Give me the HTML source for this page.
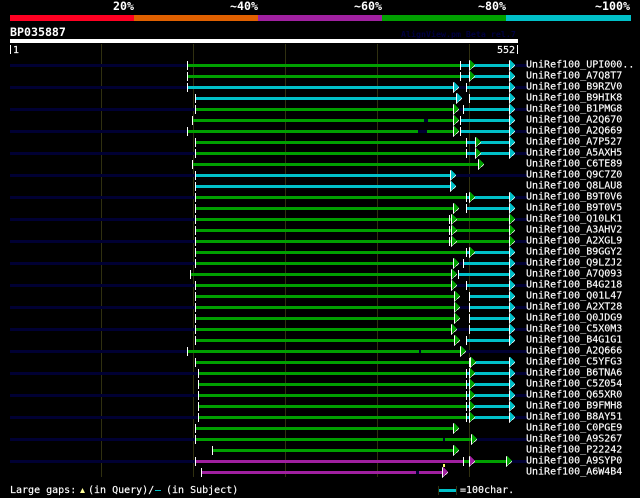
<!DOCTYPE html>
<html><head><meta charset="utf-8"><style>
html,body{margin:0;padding:0;background:#000;width:640px;height:498px;overflow:hidden}
svg{display:block}
text{font-family:"DejaVu Sans Mono","Liberation Mono",monospace;font-size:10px;fill:#fff;stroke:#fff;stroke-width:.15;white-space:pre}
.h{font-weight:bold;font-size:11.62px;stroke:none}
.a{font-weight:bold;font-size:8.3px;fill:#000040;stroke:none}
path{fill:none;stroke-width:3}
polygon{shape-rendering:crispEdges}
.k{stroke:#000033}.g{stroke:#00a000}.c{stroke:#00c0c8}.p{stroke:#a020a0}
.t{stroke:#fff;stroke-width:1}
.w{stroke:#303010;stroke-width:1}
</style></head><body>
<svg width="640" height="498" viewBox="0 0 640 498" xmlns="http://www.w3.org/2000/svg">
<defs>
<g id="G"><polygon points="0,-5.500 6.500,0 0,5.500" fill="#fff"/><polygon points="1,-5.500 6,-.5 1,4" fill="#00a000"/></g>
<g id="C"><polygon points="0,-5.500 6.500,0 0,5.500" fill="#fff"/><polygon points="1,-5.500 6,-.5 1,4" fill="#00c0c8"/></g>
<g id="P"><polygon points="0,-5.500 6.500,0 0,5.500" fill="#fff"/><polygon points="1,-5.500 6,-.5 1,4" fill="#a020a0"/></g>
</defs>
<text class="h" x="113" y="10">20%</text><text class="h" x="230" y="10">~40%</text><text class="h" x="354" y="10">~60%</text><text class="h" x="478" y="10">~80%</text><text class="h" x="595" y="10">~100%</text>
<rect x="10" y="15" width="124" height="6" fill="#ff0022"/><rect x="134" y="15" width="124" height="6" fill="#e06000"/><rect x="258" y="15" width="124" height="6" fill="#a020a0"/><rect x="382" y="15" width="124" height="6" fill="#00a000"/><rect x="506" y="15" width="125" height="6" fill="#00c0c8"/>
<text class="h" x="10" y="36">BP035887</text>
<text class="a" x="401" y="37">AlignView.pm Beta rel.7</text>
<rect x="10" y="39" width="508" height="4" fill="#fff"/>
<rect x="10" y="45" width="1" height="9" fill="#fff"/><text x="13" y="53">1</text>
<text x="497" y="53">552</text><rect x="517" y="45" width="1" height="9" fill="#fff"/>
<path class="w" d="M101.5 44V477M193.5 44V477M285.5 44V477M377.5 44V477M469.5 44V477"/>

<g transform="translate(0,65.5)"><path class="k" d="M10 0H187M515 0H527"/><path class="g" d="M188 0H460"/><path class="c" d="M461 0H510"/><path class="t" d="M187.5-4.5V4.5M460.5-4.5V4.5"/><use href="#G" x="469"/><use href="#C" x="509"/><text x="526" y="2">UniRef100_UPI000..</text></g>
<g transform="translate(0,76.5)"><path class="g" d="M188 0H460"/><path class="c" d="M461 0H510"/><path class="t" d="M187.5-4.5V4.5M460.5-4.5V4.5"/><use href="#G" x="469"/><use href="#C" x="509"/><text x="526" y="2">UniRef100_A7Q8T7</text></g>
<g transform="translate(0,87.5)"><path class="k" d="M10 0H187M459 0H466M515 0H527"/><path class="c" d="M188 0H454M467 0H510"/><path class="t" d="M187.5-4.5V4.5M466.5-4.5V4.5"/><use href="#C" x="453"/><use href="#C" x="509"/><text x="526" y="2">UniRef100_B9RZV0</text></g>
<g transform="translate(0,98.5)"><path class="c" d="M196 0H457M470 0H510"/><path class="t" d="M195.5-4.5V4.5M469.5-4.5V4.5"/><use href="#C" x="456"/><use href="#C" x="509"/><text x="526" y="2">UniRef100_B9HIK8</text></g>
<g transform="translate(0,109.5)"><path class="k" d="M10 0H195M459 0H463M515 0H527"/><path class="g" d="M196 0H454"/><path class="c" d="M464 0H510"/><path class="t" d="M195.5-4.5V4.5M463.5-4.5V4.5"/><use href="#G" x="453"/><use href="#C" x="509"/><text x="526" y="2">UniRef100_B1PMG8</text></g>
<g transform="translate(0,120.5)"><path class="k" d="M424 0H428"/><path class="g" d="M193 0H424M428 0H454"/><path class="c" d="M461 0H510"/><path class="t" d="M192.5-4.5V4.5M460.5-4.5V4.5"/><use href="#G" x="453"/><use href="#C" x="509"/><text x="526" y="2">UniRef100_A2Q670</text></g>
<g transform="translate(0,131.5)"><path class="k" d="M10 0H187M418 0H427M515 0H527"/><path class="g" d="M188 0H418M427 0H454"/><path class="c" d="M461 0H510"/><path class="t" d="M187.5-4.5V4.5M460.5-4.5V4.5"/><use href="#G" x="453"/><use href="#C" x="509"/><text x="526" y="2">UniRef100_A2Q669</text></g>
<g transform="translate(0,142.5)"><path class="g" d="M196 0H466"/><path class="c" d="M467 0H510"/><path class="t" d="M195.5-4.5V4.5M466.5-4.5V4.5"/><use href="#G" x="475"/><use href="#C" x="509"/><text x="526" y="2">UniRef100_A7P527</text></g>
<g transform="translate(0,153.5)"><path class="k" d="M10 0H195M515 0H527"/><path class="g" d="M196 0H466"/><path class="c" d="M467 0H510"/><path class="t" d="M195.5-4.5V4.5M466.5-4.5V4.5"/><use href="#G" x="475"/><use href="#C" x="509"/><text x="526" y="2">UniRef100_A5AXH5</text></g>
<g transform="translate(0,164.5)"><path class="g" d="M193 0H479"/><path class="t" d="M192.5-4.5V4.5"/><use href="#G" x="478"/><text x="526" y="2">UniRef100_C6TE89</text></g>
<g transform="translate(0,175.5)"><path class="k" d="M10 0H195M456 0H527"/><path class="c" d="M196 0H451"/><path class="t" d="M195.5-4.5V4.5"/><use href="#C" x="450"/><text x="526" y="2">UniRef100_Q9C7Z0</text></g>
<g transform="translate(0,186.5)"><path class="c" d="M196 0H451"/><path class="t" d="M195.5-4.5V4.5"/><use href="#C" x="450"/><text x="526" y="2">UniRef100_Q8LAU8</text></g>
<g transform="translate(0,197.5)"><path class="k" d="M10 0H195M515 0H527"/><path class="g" d="M196 0H466"/><path class="c" d="M467 0H510"/><path class="t" d="M195.5-4.5V4.5M466.5-4.5V4.5"/><use href="#G" x="469"/><use href="#C" x="509"/><text x="526" y="2">UniRef100_B9T0V6</text></g>
<g transform="translate(0,208.5)"><path class="g" d="M196 0H454"/><path class="c" d="M467 0H510"/><path class="t" d="M195.5-4.5V4.5M466.5-4.5V4.5"/><use href="#G" x="453"/><use href="#C" x="509"/><text x="526" y="2">UniRef100_B9T0V5</text></g>
<g transform="translate(0,219.5)"><path class="k" d="M10 0H195M515 0H527"/><path class="g" d="M196 0H510"/><path class="t" d="M195.5-4.5V4.5M449.5-4.5V4.5"/><use href="#G" x="451"/><use href="#G" x="509"/><text x="526" y="2">UniRef100_Q10LK1</text></g>
<g transform="translate(0,230.5)"><path class="g" d="M196 0H510"/><path class="t" d="M195.5-4.5V4.5M449.5-4.5V4.5"/><use href="#G" x="451"/><use href="#G" x="509"/><text x="526" y="2">UniRef100_A3AHV2</text></g>
<g transform="translate(0,241.5)"><path class="k" d="M10 0H195M515 0H527"/><path class="g" d="M196 0H510"/><path class="t" d="M195.5-4.5V4.5M449.5-4.5V4.5"/><use href="#G" x="451"/><use href="#G" x="509"/><text x="526" y="2">UniRef100_A2XGL9</text></g>
<g transform="translate(0,252.5)"><path class="g" d="M196 0H466"/><path class="c" d="M467 0H510"/><path class="t" d="M195.5-4.5V4.5M466.5-4.5V4.5"/><use href="#G" x="469"/><use href="#C" x="509"/><text x="526" y="2">UniRef100_B9GGY2</text></g>
<g transform="translate(0,263.5)"><path class="k" d="M10 0H195M459 0H463M515 0H527"/><path class="g" d="M196 0H454"/><path class="c" d="M464 0H510"/><path class="t" d="M195.5-4.5V4.5M463.5-4.5V4.5"/><use href="#G" x="453"/><use href="#C" x="509"/><text x="526" y="2">UniRef100_Q9LZJ2</text></g>
<g transform="translate(0,274.5)"><path class="g" d="M191 0H452"/><path class="c" d="M459 0H510"/><path class="t" d="M190.5-4.5V4.5M458.5-4.5V4.5"/><use href="#G" x="451"/><use href="#C" x="509"/><text x="526" y="2">UniRef100_A7Q093</text></g>
<g transform="translate(0,285.5)"><path class="k" d="M10 0H195M456 0H466M515 0H527"/><path class="g" d="M196 0H452"/><path class="c" d="M467 0H510"/><path class="t" d="M195.5-4.5V4.5M466.5-4.5V4.5"/><use href="#G" x="451"/><use href="#C" x="509"/><text x="526" y="2">UniRef100_B4G218</text></g>
<g transform="translate(0,296.5)"><path class="g" d="M196 0H455"/><path class="c" d="M470 0H510"/><path class="t" d="M195.5-4.5V4.5M469.5-4.5V4.5"/><use href="#G" x="454"/><use href="#C" x="509"/><text x="526" y="2">UniRef100_Q01L47</text></g>
<g transform="translate(0,307.5)"><path class="k" d="M10 0H195M459 0H469M515 0H527"/><path class="g" d="M196 0H455"/><path class="c" d="M470 0H510"/><path class="t" d="M195.5-4.5V4.5M469.5-4.5V4.5"/><use href="#G" x="454"/><use href="#C" x="509"/><text x="526" y="2">UniRef100_A2XT28</text></g>
<g transform="translate(0,318.5)"><path class="g" d="M196 0H455"/><path class="c" d="M470 0H510"/><path class="t" d="M195.5-4.5V4.5M469.5-4.5V4.5"/><use href="#G" x="454"/><use href="#C" x="509"/><text x="526" y="2">UniRef100_Q0JDG9</text></g>
<g transform="translate(0,329.5)"><path class="k" d="M10 0H195M456 0H469M515 0H527"/><path class="g" d="M196 0H452"/><path class="c" d="M470 0H510"/><path class="t" d="M195.5-4.5V4.5M469.5-4.5V4.5"/><use href="#G" x="451"/><use href="#C" x="509"/><text x="526" y="2">UniRef100_C5X0M3</text></g>
<g transform="translate(0,340.5)"><path class="g" d="M196 0H455"/><path class="c" d="M467 0H510"/><path class="t" d="M195.5-4.5V4.5M466.5-4.5V4.5"/><use href="#G" x="454"/><use href="#C" x="509"/><text x="526" y="2">UniRef100_B4G1G1</text></g>
<g transform="translate(0,351.5)"><path class="k" d="M10 0H187M419 0H421M465 0H527"/><path class="g" d="M188 0H419M421 0H461"/><path class="t" d="M187.5-4.5V4.5"/><use href="#G" x="460"/><text x="526" y="2">UniRef100_A2Q666</text></g>
<g transform="translate(0,362.5)"><path class="g" d="M196 0H471"/><path class="c" d="M471 0H510"/><path class="t" d="M195.5-4.5V4.5M469.5-4.5V4.5"/><use href="#G" x="470"/><use href="#C" x="509"/><text x="526" y="2">UniRef100_C5YFG3</text></g>
<g transform="translate(0,373.5)"><path class="k" d="M10 0H198M515 0H527"/><path class="g" d="M199 0H466"/><path class="c" d="M467 0H510"/><path class="t" d="M198.5-4.5V4.5M466.5-4.5V4.5"/><use href="#G" x="469"/><use href="#C" x="509"/><text x="526" y="2">UniRef100_B6TNA6</text></g>
<g transform="translate(0,384.5)"><path class="g" d="M199 0H466"/><path class="c" d="M467 0H510"/><path class="t" d="M198.5-4.5V4.5M466.5-4.5V4.5"/><use href="#G" x="469"/><use href="#C" x="509"/><text x="526" y="2">UniRef100_C5Z054</text></g>
<g transform="translate(0,395.5)"><path class="k" d="M10 0H198M515 0H527"/><path class="g" d="M199 0H466"/><path class="c" d="M467 0H510"/><path class="t" d="M198.5-4.5V4.5M466.5-4.5V4.5"/><use href="#G" x="469"/><use href="#C" x="509"/><text x="526" y="2">UniRef100_Q65XR0</text></g>
<g transform="translate(0,406.5)"><path class="g" d="M199 0H466"/><path class="c" d="M467 0H510"/><path class="t" d="M198.5-4.5V4.5M466.5-4.5V4.5"/><use href="#G" x="469"/><use href="#C" x="509"/><text x="526" y="2">UniRef100_B9FMH8</text></g>
<g transform="translate(0,417.5)"><path class="k" d="M10 0H198M515 0H527"/><path class="g" d="M199 0H466"/><path class="c" d="M467 0H510"/><path class="t" d="M198.5-4.5V4.5M466.5-4.5V4.5"/><use href="#G" x="469"/><use href="#C" x="509"/><text x="526" y="2">UniRef100_B8AY51</text></g>
<g transform="translate(0,428.5)"><path class="g" d="M196 0H454"/><path class="t" d="M195.5-4.5V4.5"/><use href="#G" x="453"/><text x="526" y="2">UniRef100_C0PGE9</text></g>
<g transform="translate(0,439.5)"><path class="k" d="M10 0H195M443 0H445M476 0H527"/><path class="g" d="M196 0H443M445 0H472"/><path class="t" d="M195.5-4.5V4.5"/><use href="#G" x="471"/><text x="526" y="2">UniRef100_A9S267</text></g>
<g transform="translate(0,450.5)"><path class="g" d="M213 0H454"/><path class="t" d="M212.5-4.5V4.5"/><use href="#G" x="453"/><text x="526" y="2">UniRef100_P22242</text></g>
<g transform="translate(0,461.5)"><path class="k" d="M10 0H195M511 0H527"/><path class="p" d="M196 0H463"/><path class="g" d="M464 0H507"/><path class="t" d="M195.5-4.5V4.5M463.5-4.5V4.5"/><use href="#P" x="469"/><use href="#G" x="506"/><text x="526" y="2">UniRef100_A9SYP0</text></g>
<g transform="translate(0,472.5)"><path class="k" d="M416 0H419"/><path class="p" d="M202 0H416M419 0H443"/><path class="t" d="M201.5-4.5V4.5"/><use href="#P" x="442"/><text x="526" y="2">UniRef100_A6W4B4</text></g>
<rect x="443" y="464" width="2" height="3" fill="#ffff66"/>

<text x="10" y="493">Large gaps:</text>
<polygon points="82.5,488 85,493 80,493" fill="#ffff99"/>
<text x="88" y="493">(in Query)/</text>
<rect x="155" y="490" width="6" height="1" fill="#00c0c8"/>
<text x="166" y="493">(in Subject)</text>
<path class="c" d="M439 490.5H456"/>
<path class="w" d="M438.500 486V495M456.500 486V495"/>
<text x="460" y="493">=100char.</text>
</svg>
</body></html>
